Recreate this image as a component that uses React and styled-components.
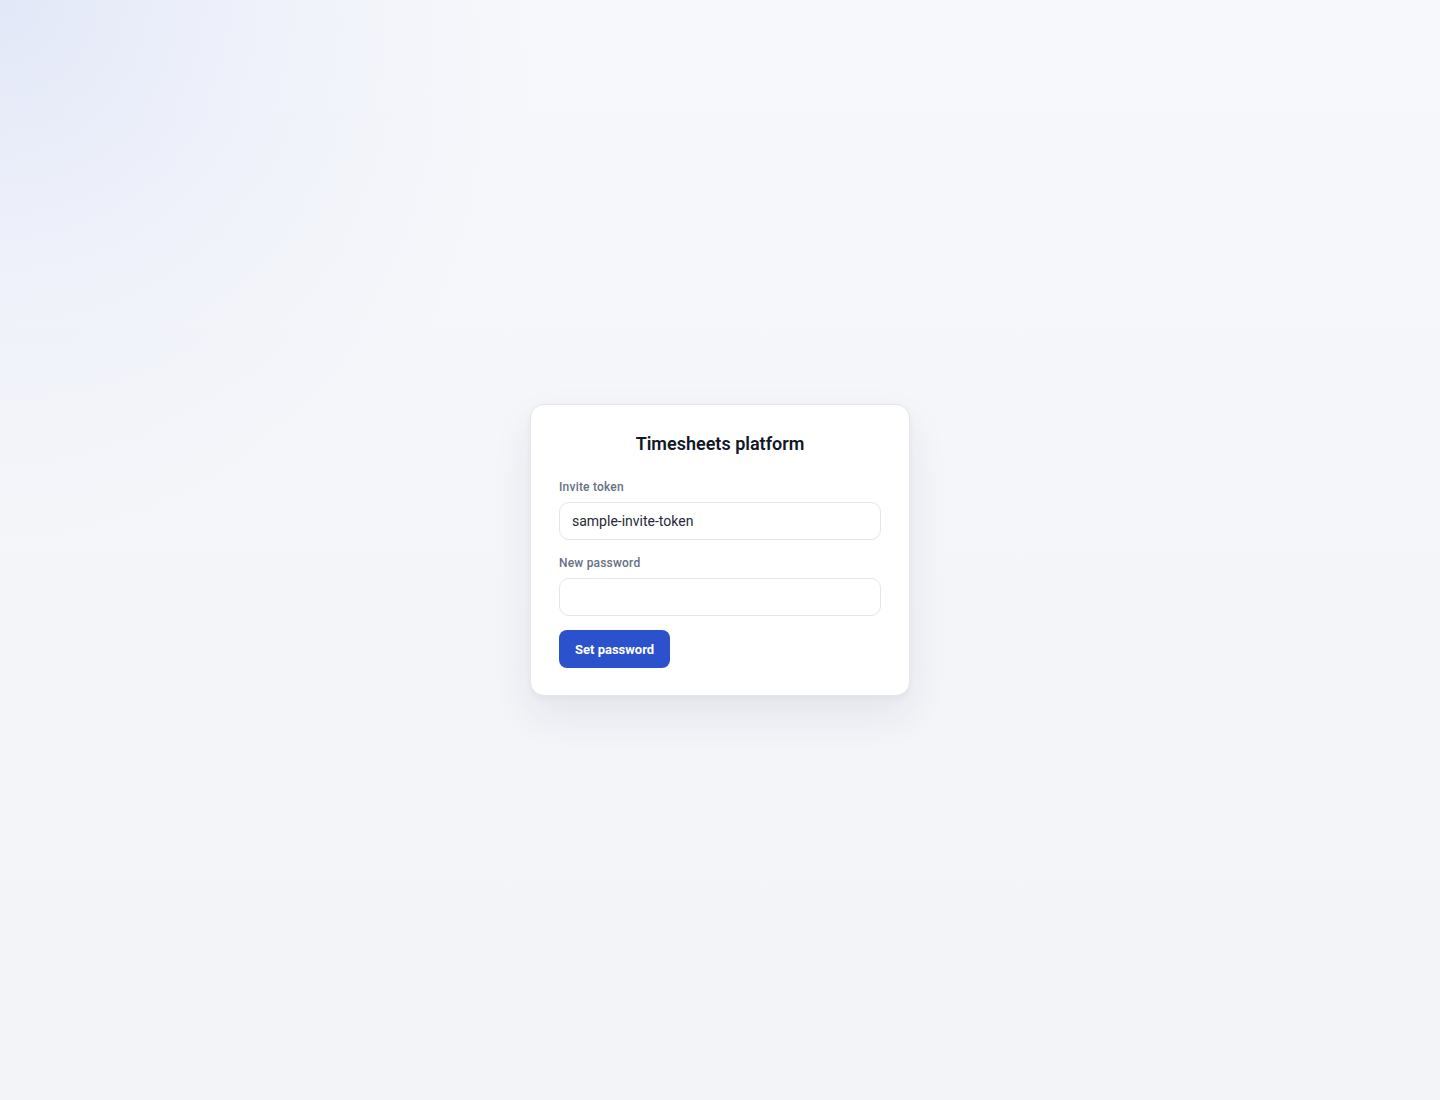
import React from "react";
import styled, { createGlobalStyle } from "styled-components";

const GlobalStyle = createGlobalStyle`
  *, *::before, *::after { box-sizing: border-box; }
  html, body { margin: 0; padding: 0; }
  body {
    font-family: Roboto, "Liberation Sans", sans-serif;
    color: #111827;
    background: #f4f5f9;
  }
`;

const Page = styled.main`
  min-height: 100vh;
  display: flex;
  align-items: center;
  justify-content: center;
  background:
    radial-gradient(circle at 0 0, rgba(224, 230, 248, 0.9) 0, rgba(232, 236, 250, 0.5) 270px, rgba(244, 245, 249, 0) 540px),
    linear-gradient(180deg, #f7f8fb 0%, #f4f5f9 60%, #f3f4f8 100%);
`;

const Card = styled.section`
  width: 380px;
  background: #ffffff;
  border: 1px solid #e3e6ec;
  border-radius: 14px;
  padding: 27px 28px;
  box-shadow: 0 18px 40px rgba(30, 41, 70, 0.08), 0 2px 6px rgba(30, 41, 70, 0.04);
  display: flex;
  flex-direction: column;
`;

const Title = styled.h1`
  margin: 0 0 23px;
  text-align: center;
  font-size: 18px;
  line-height: 24px;
  font-weight: 600;
  color: #111827;
`;

const Form = styled.form`
  display: flex;
  flex-direction: column;
  gap: 15px;
`;

const Field = styled.label`
  display: flex;
  flex-direction: column;
  gap: 7px;
`;

const LabelText = styled.span`
  font-size: 12px;
  line-height: 16px;
  font-weight: 500;
  color: #667085;
  letter-spacing: 0.2px;
`;

const Input = styled.input`
  height: 38px;
  width: 100%;
  border: 1px solid #e3e5ea;
  border-radius: 10px;
  padding: 0 12px;
  font-family: inherit;
  font-size: 14px;
  color: #1f2937;
  background: #fff;
  outline: none;
`;

const Actions = styled.div`
  display: flex;
  margin-top: -1px;
`;

const Button = styled.button`
  height: 38px;
  padding: 0 16px;
  border: none;
  border-radius: 8px;
  background: #2b52cc;
  color: #fff;
  font-family: inherit;
  font-size: 13px;
  font-weight: 700;
  cursor: pointer;
`;

export default function App() {
  return (
    <>
      <GlobalStyle />
      <Page>
        <Card>
          <Title>Timesheets platform</Title>
          <Form onSubmit={(e) => e.preventDefault()}>
            <Field>
              <LabelText>Invite token</LabelText>
              <Input type="text" defaultValue="sample-invite-token" />
            </Field>
            <Field>
              <LabelText>New password</LabelText>
              <Input type="password" />
            </Field>
            <Actions>
              <Button type="submit">Set password</Button>
            </Actions>
          </Form>
        </Card>
      </Page>
    </>
  );
}
